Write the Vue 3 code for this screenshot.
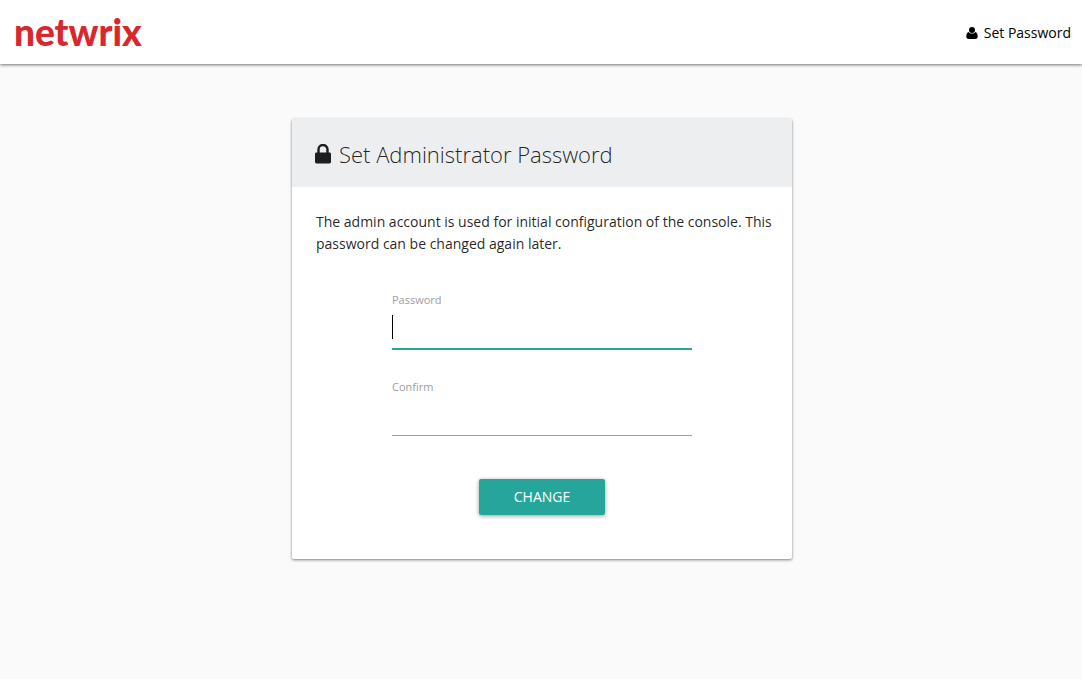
<script setup>
import { ref, onMounted } from 'vue'

const password = ref('')
const confirm = ref('')
const passwordInput = ref(null)
const focused = ref('password')

onMounted(() => passwordInput.value.focus())
</script>

<template>
  <div class="page">
    <header class="topbar">
      <a class="brand" href="#">netwrix</a>
      <a class="nav-link" href="#">
        <svg class="user-icon" viewBox="0 0 12 12" aria-hidden="true">
          <circle cx="6" cy="3" r="3" />
          <path d="M2.7 5C1 5.2.3 7 .3 9.5.3 11.200 1.200 12 2.600 12h6.800c1.400 0 2.300-.8 2.300-2.500C11.700 7 11 5.200 9.300 5 8.500 6 7.400 6.600 6 6.600S3.500 6 2.700 5z" />
        </svg>
        <span>Set Password</span>
      </a>
    </header>

    <main class="content">
      <section class="card">
        <h1 class="card-title">
          <svg class="lock-icon" viewBox="0 0 16 20" aria-hidden="true">
            <path d="M3.500 9V5.500a4.500 4.500 0 0 1 9 0V9" fill="none" stroke="currentColor" stroke-width="2.400" />
            <rect x="0" y="8.500" width="16" height="11" rx="1.400" fill="currentColor" />
          </svg>
          <span>Set Administrator Password</span>
        </h1>
        <div class="card-body">
          <p class="intro">
            The admin account is used for initial configuration of the console. This password can be changed again later.
          </p>
          <form class="form" @submit.prevent>
            <div class="field">
              <label for="password">Password</label>
              <div class="control" :class="{ active: focused === 'password', filled: password }">
                <input id="password" ref="passwordInput" v-model="password" type="password" @focus="focused = 'password'" />
                <span v-if="focused === 'password' && !password" class="caret"></span>
              </div>
            </div>
            <div class="field">
              <label for="confirm">Confirm</label>
              <div class="control" :class="{ active: focused === 'confirm', filled: confirm }">
                <input id="confirm" v-model="confirm" type="password" @focus="focused = 'confirm'" />
                <span v-if="focused === 'confirm' && !confirm" class="caret"></span>
              </div>
            </div>
            <button class="submit" type="submit">CHANGE</button>
          </form>
        </div>
      </section>
    </main>
  </div>
</template>

<style>
body {
  margin: 0;
  background: #fafafa;
}
</style>

<style scoped>
.page {
  min-height: 100vh;
  background: #fafafa;
  color: rgba(0, 0, 0, 0.87);
  font-family: "Segoe UI", "Open Sans", "Noto Sans", sans-serif;
  font-size: 14px;
  line-height: 22px;
}
.topbar {
  display: flex;
  align-items: center;
  justify-content: space-between;
  height: 64px;
  padding: 0 11px 0 14px;
  background: #fff;
  box-shadow: 0 1px 3px rgba(0, 0, 0, 0.55);
}
.brand {
  color: #d9272e;
  font-family: Lato, sans-serif;
  font-size: 37px;
  font-weight: 900;
  line-height: 62px;
  text-decoration: none;
}
.nav-link {
  display: flex;
  align-items: center;
  gap: 6px;
  padding-top: 2px;
  color: #000;
  text-decoration: none;
}
.user-icon {
  width: 12px;
  height: 12px;
  fill: #000;
}
.content {
  padding: 55px 15px 40px 17px;
}
.card {
  max-width: 500px;
  margin: 0 auto;
  border-radius: 2px;
  background: #fff;
  box-shadow: 0 1px 3px rgba(0, 0, 0, 0.5);
}
.card-title {
  display: flex;
  align-items: center;
  gap: 8px;
  margin: 0;
  padding: 19px 23px 17px;
  border-radius: 2px 2px 0 0;
  background: #eceeef;
  font-size: 22px;
  font-weight: 300;
  line-height: 32px;
}
.lock-icon {
  flex: none;
  width: 16px;
  height: 20px;
  color: #1d1f1f;
}
.card-body {
  padding: 24px 12px 44px 24px;
}
.intro {
  margin: 0;
}
.form {
  display: flex;
  flex-direction: column;
  align-items: center;
  margin: 36px 12px 0 0;
}
.field {
  width: 100%;
  max-width: 300px;
  margin-bottom: 29px;
}
label {
  display: block;
  color: #9e9e9e;
  font-size: 11px;
  line-height: 18px;
}
.control {
  position: relative;
}
input {
  display: block;
  box-sizing: border-box;
  width: 100%;
  height: 40px;
  padding: 0 0 8px;
  border: 0;
  border-bottom: 1px solid #9e9e9e;
  outline: 0;
  background: transparent;
  caret-color: transparent;
  font: inherit;
}
.filled input {
  caret-color: #000;
}
.active input {
  border-bottom-color: #26a69a;
  box-shadow: 0 1px 0 #26a69a;
}
.caret {
  position: absolute;
  top: 6px;
  left: 0;
  width: 1px;
  height: 24px;
  background: #000;
}
.submit {
  min-width: 126px;
  height: 36px;
  margin-top: 14px;
  padding: 0 32px;
  border: 0;
  border-radius: 2px;
  background: #26a69a;
  box-shadow: 0 1px 4px rgba(0, 0, 0, 0.4);
  color: #fff;
  font: inherit;
  line-height: 34px;
}
</style>
